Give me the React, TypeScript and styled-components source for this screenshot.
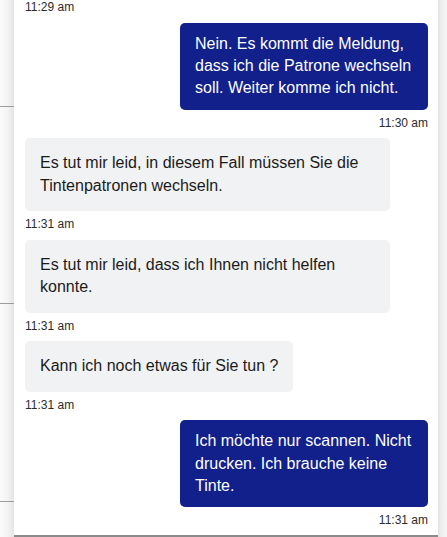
import React from "react";
import styled, { createGlobalStyle } from "styled-components";

const GlobalStyle = createGlobalStyle`
  html, body { margin: 0; padding: 0; background: #ffffff; }
  body { font-family: "Liberation Sans", Arial, sans-serif; overflow: hidden; }
  #root { height: 537px; }
`;

const Page = styled.div`
  display: flex;
  height: 537px;
  width: 447px;
  overflow: hidden;
`;

const LeftGutter = styled.div`
  width: 14px;
  flex: none;
  display: flex;
  flex-direction: column;
  background: linear-gradient(to right, #fbfbfb 0%, #f3f3f3 55%, #e4e4e4 100%);
`;

const GutterRow = styled.div<{ $h: number }>`
  height: ${(p) => p.$h}px;
  flex: none;
  border-bottom: 1px solid #9c9c9c;
`;

const RightGutter = styled.div`
  flex: 1;
  background: linear-gradient(to right, #e2e2e2 0%, #eeeeee 40%, #f6f6f6 100%);
`;

const Panel = styled.div`
  width: 424px;
  flex: none;
  background: #ffffff;
  display: flex;
  flex-direction: column;
`;

const MessageList = styled.div`
  display: flex;
  flex-direction: column;
  padding: 0 10px 8px 11px;
  border-bottom: 2px solid #8a8a8a;
`;

const Group = styled.div<{ $mine?: boolean }>`
  display: flex;
  flex-direction: column;
  align-items: ${(p) => (p.$mine ? "flex-end" : "flex-start")};
  & + & { margin-top: 8.6px; }
`;

const Bubble = styled.div<{ $mine?: boolean }>`
  box-sizing: border-box;
  max-width: ${(p) => (p.$mine ? 248 : 365)}px;
  padding: ${(p) => (p.$mine ? "10px 15px" : "14px 15px")};
  border-radius: 5px;
  background: ${(p) => (p.$mine ? "#11208b" : "#f1f2f4")};
  color: ${(p) => (p.$mine ? "#ffffff" : "#1b1b1b")};
  font-size: 16px;
  line-height: 22.4px;
  margin-bottom: 6px;
`;

const Time = styled.div`
  font-size: 12px;
  line-height: 14px;
  color: #2b2b2b;
`;

type Msg = { mine?: boolean; text?: string; time: string };

const messages: Msg[] = [
  { time: "11:29 am" },
  { mine: true, text: "Nein. Es kommt die Meldung, dass ich die Patrone wechseln soll. Weiter komme ich nicht.", time: "11:30 am" },
  { text: "Es tut mir leid, in diesem Fall müssen Sie die Tintenpatronen wechseln.", time: "11:31 am" },
  { text: "Es tut mir leid, dass ich Ihnen nicht helfen konnte.", time: "11:31 am" },
  { text: "Kann ich noch etwas für Sie tun ?", time: "11:31 am" },
  { mine: true, text: "Ich möchte nur scannen. Nicht drucken. Ich brauche keine Tinte.", time: "11:31 am" },
];

export default function App() {
  return (
    <>
      <GlobalStyle />
      <Page>
        <LeftGutter>
          <GutterRow $h={106} />
          <GutterRow $h={196} />
          <GutterRow $h={197} />
        </LeftGutter>
        <Panel>
          <MessageList>
            {messages.map((m, i) => (
              <Group key={i} $mine={m.mine}>
                {m.text && <Bubble $mine={m.mine}>{m.text}</Bubble>}
                <Time>{m.time}</Time>
              </Group>
            ))}
          </MessageList>
        </Panel>
        <RightGutter />
      </Page>
    </>
  );
}
